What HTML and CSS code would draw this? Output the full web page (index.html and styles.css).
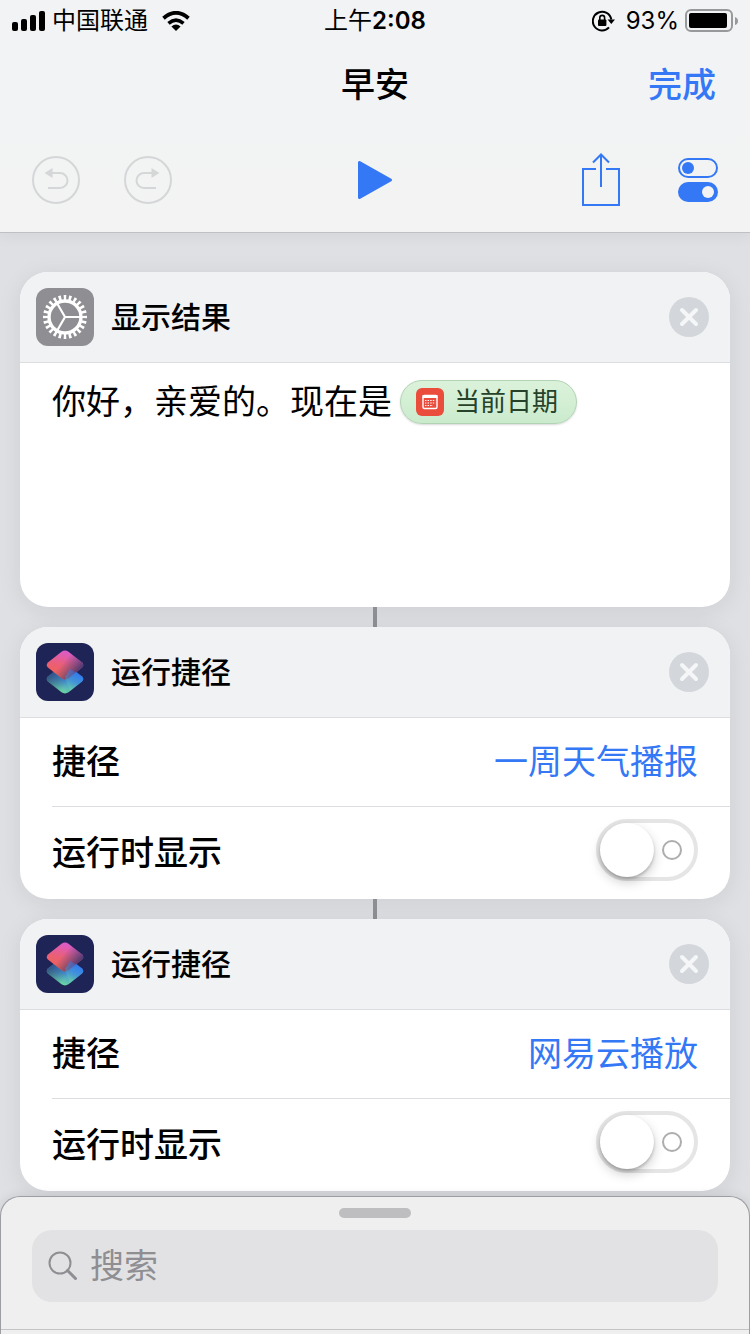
FILE: index.html
```
<!DOCTYPE html>
<html lang="zh-CN">
<head>
    <meta charset="UTF-8">
    <meta name="viewport" content="width=device-width, initial-scale=1.0">
    <title>早安</title>
    <link rel="stylesheet" href="styles.css">
</head>
<body>
    <!-- Shared icons -->
    <svg class="sprite" aria-hidden="true">
        <defs>
            <linearGradient id="tile-top" x1="0.6" y1="0" x2="0.35" y2="1">
                <stop offset="0" stop-color="#d95bd2"/>
                <stop offset="0.5" stop-color="#ea5f78"/>
                <stop offset="1" stop-color="#f2634a"/>
            </linearGradient>
            <linearGradient id="tile-shade" x1="0.45" y1="0.4" x2="0.9" y2="0.7">
                <stop offset="0" stop-color="#4a4080" stop-opacity="0"/>
                <stop offset="1" stop-color="#39336f" stop-opacity="0.9"/>
            </linearGradient>
            <linearGradient id="tile-bottom" x1="0.75" y1="0.2" x2="0.4" y2="1">
                <stop offset="0" stop-color="#2f78f2"/>
                <stop offset="0.5" stop-color="#4596d6"/>
                <stop offset="1" stop-color="#6fdc9a"/>
            </linearGradient>
            <linearGradient id="tile-dark" x1="0" y1="0.3" x2="0.55" y2="0.7">
                <stop offset="0" stop-color="#2a3a66" stop-opacity="0.85"/>
                <stop offset="1" stop-color="#2a3a66" stop-opacity="0"/>
            </linearGradient>
            <path id="tile" d="M25.500 -13.300Q29 -15.600 32.500 -13.300L45.800 -2.800Q48.800 0 45.800 2.800L32.500 13.300Q29 15.600 25.500 13.300L12.200 2.800Q9.200 0 12.200 -2.800Z"/>
        </defs>
        <symbol id="icon-shortcuts" viewBox="0 0 58 58">
            <rect width="58" height="58" rx="12" fill="#1f2456"/>
            <g transform="translate(0 36)">
                <use href="#tile" fill="url(#tile-bottom)"/>
                <use href="#tile" fill="url(#tile-dark)"/>
            </g>
            <g transform="translate(0 22)">
                <use href="#tile" fill="url(#tile-top)"/>
                <use href="#tile" fill="url(#tile-shade)"/>
            </g>
            <!-- lower tile coming through on the right of the overlap -->
            <path d="M34 26L45.800 33.200Q48.800 36 45.800 38.800L34 48L29 34Z" fill="url(#tile-bottom)" opacity="0.5"/>
        </symbol>
        <symbol id="icon-gear" viewBox="0 0 58 58">
            <rect width="58" height="58" rx="12" fill="#8e8e93"/>
            <g fill="none" stroke="#fff">
                <circle cx="29" cy="29" r="19.500" stroke-width="5" pathLength="48" stroke-dasharray="1 1" stroke-dashoffset="0.500"/>
                <circle cx="29" cy="29" r="16" stroke-width="3.400"/>
                <path stroke-width="2.200" d="M29 29H44M29 29L21.500 16M29 29L21.500 42"/>
            </g>
        </symbol>
        <symbol id="icon-close" viewBox="0 0 40 40">
            <circle cx="20" cy="20" r="20" fill="#d3d6db"/>
            <path d="M13 13L27 27M27 13L13 27" stroke="#f5f6f8" stroke-width="4" stroke-linecap="round"/>
        </symbol>
    </svg>

    <header class="top">
        <div class="status-bar">
            <div class="status-left">
                <svg width="34" height="20" viewBox="0 0 34 20" aria-hidden="true">
                    <rect x="0" y="11" width="6" height="9" rx="2"/>
                    <rect x="9" y="8" width="6" height="12" rx="2"/>
                    <rect x="18" y="4" width="6" height="16" rx="2"/>
                    <rect x="27" y="0" width="6" height="20" rx="2"/>
                </svg>
                <span class="carrier">中国联通</span>
                <svg width="28" height="20" viewBox="0 0 28 20" aria-hidden="true">
                    <path d="M14 20L9.400 15.400Q14 11.700 18.600 15.400Z"/>
                    <path d="M6.500 12.300Q14 5.900 21.500 12.300" fill="none" stroke="#000" stroke-width="3.600"/>
                    <path d="M1.500 7.200Q14 -3.600 26.500 7.200" fill="none" stroke="#000" stroke-width="3.800"/>
                </svg>
            </div>
            <span>上午<span class="time">2:08</span></span>
            <div class="status-right">
                <svg width="24" height="22" viewBox="0 0 24 22" aria-hidden="true">
                    <path d="M17 17.400A9.300 9.300 0 1 1 19.300 9.500" fill="none" stroke="#000" stroke-width="2"/>
                    <path d="M15.600 9.500H23L19.300 14Z"/>
                    <rect x="6" y="9.500" width="8.400" height="6.600" rx="1"/>
                    <path d="M7.800 10V7.800a2.400 2.400 0 0 1 4.800 0V10" fill="none" stroke="#000" stroke-width="1.600"/>
                </svg>
                <span class="percent">93%</span>
                <svg width="53" height="24" viewBox="0 0 53 24" aria-hidden="true">
                    <rect x="1" y="1" width="46" height="21" rx="5" fill="none" stroke="#98999b" stroke-width="2"/>
                    <rect x="4" y="4" width="38" height="15" rx="2"/>
                    <path d="M50 8Q53 9 53 12T50 16Z" fill="#98999b"/>
                </svg>
            </div>
        </div>

        <div class="nav-bar">
            <h1>早安</h1>
            <button class="done" type="button">完成</button>
        </div>

        <div class="toolbar">
            <div class="tools tools-left">
                <button type="button" aria-label="撤销">
                    <svg width="48" height="48" viewBox="0 0 48 48" fill="none" stroke="#d5d6d8" stroke-width="2">
                        <circle cx="24" cy="24" r="23"/>
                        <path d="M20 17H28a7.500 7.500 0 0 1 0 15H16"/>
                        <path d="M12.500 17L20.500 12V22Z" fill="#d5d6d8" stroke="none"/>
                    </svg>
                </button>
                <button type="button" aria-label="重做">
                    <svg width="48" height="48" viewBox="0 0 48 48" fill="none" stroke="#d5d6d8" stroke-width="2">
                        <circle cx="24" cy="24" r="23"/>
                        <path d="M28 17H20a7.500 7.500 0 0 0 0 15H32"/>
                        <path d="M35.500 17L27.500 12V22Z" fill="#d5d6d8" stroke="none"/>
                    </svg>
                </button>
            </div>
            <button type="button" aria-label="运行">
                <svg width="36" height="40" viewBox="0 0 36 40" fill="#3478f6" stroke="#3478f6" stroke-width="3" stroke-linejoin="round">
                    <path d="M2.500 2.500V37.500L33.500 20Z"/>
                </svg>
            </button>
            <div class="tools tools-right">
                <button type="button" aria-label="共享">
                    <svg width="40" height="54" viewBox="0 0 40 54" fill="none" stroke="#3478f6" stroke-width="2">
                        <path d="M15 16H2V52H38V16H25"/>
                        <path d="M20 34V2M12 9.500L20 1.500L28 9.500"/>
                    </svg>
                </button>
                <button type="button" aria-label="设置">
                    <svg width="40" height="44" viewBox="0 0 40 44">
                        <rect x="1" y="1" width="38" height="18" rx="9" fill="none" stroke="#3478f6" stroke-width="2"/>
                        <circle cx="10" cy="10" r="6" fill="#3478f6"/>
                        <rect x="0" y="24" width="40" height="20" rx="10" fill="#3478f6"/>
                        <circle cx="30" cy="34" r="6" fill="#f3f3f4"/>
                    </svg>
                </button>
            </div>
        </div>
    </header>

    <main class="actions">
        <section class="card">
            <div class="card-header">
                <svg class="app-icon" aria-hidden="true"><use href="#icon-gear"/></svg>
                <h2>显示结果</h2>
                <button type="button" aria-label="移除"><svg class="close-icon"><use href="#icon-close"/></svg></button>
            </div>
            <div class="result-text" role="textbox" aria-label="文本" contenteditable="true" spellcheck="false">
                <span>你好，亲爱的。现在是</span>
                <span class="token" contenteditable="false">
                    <svg width="28" height="28" viewBox="0 0 28 28" aria-hidden="true">
                        <rect width="28" height="28" rx="6" fill="#eb4d3d"/>
                        <rect x="7" y="7.500" width="14" height="13" rx="1.500" fill="none" stroke="#fff" stroke-width="1.400"/>
                        <path d="M6.500 8.500H21.500" stroke="#fff" stroke-width="3"/>
                        <path d="M9 12.500H19.500M9 15H19.500M9 17.500H17" stroke="#fff" stroke-width="1.200" stroke-dasharray="1.400 1.200"/>
                    </svg>
                    当前日期
                </span>
            </div>
        </section>

        <div class="connector"></div>

        <section class="card">
            <div class="card-header">
                <svg class="app-icon" aria-hidden="true"><use href="#icon-shortcuts"/></svg>
                <h2>运行捷径</h2>
                <button type="button" aria-label="移除"><svg class="close-icon"><use href="#icon-close"/></svg></button>
            </div>
            <div class="row">
                <span id="weather-label">捷径</span>
                <button class="value" type="button" aria-describedby="weather-label">一周天气播报</button>
            </div>
            <div class="row row-switch">
                <label for="weather-show">运行时显示</label>
                <input class="switch" type="checkbox" role="switch" id="weather-show">
            </div>
        </section>

        <div class="connector"></div>

        <section class="card">
            <div class="card-header">
                <svg class="app-icon" aria-hidden="true"><use href="#icon-shortcuts"/></svg>
                <h2>运行捷径</h2>
                <button type="button" aria-label="移除"><svg class="close-icon"><use href="#icon-close"/></svg></button>
            </div>
            <div class="row">
                <span id="music-label">捷径</span>
                <button class="value" type="button" aria-describedby="music-label">网易云播放</button>
            </div>
            <div class="row row-switch">
                <label for="music-show">运行时显示</label>
                <input class="switch" type="checkbox" role="switch" id="music-show">
            </div>
        </section>
    </main>

    <footer class="drawer">
        <div class="grabber"></div>
        <div class="search">
            <svg width="30" height="30" viewBox="0 0 30 30" fill="none" stroke="#8e8e93" aria-hidden="true">
                <circle cx="12" cy="12" r="10.500" stroke-width="2"/>
                <path d="M19.500 19.500L27.500 27.500" stroke-width="3" stroke-linecap="round"/>
            </svg>
            <input type="search" placeholder="搜索" aria-label="搜索">
        </div>
    </footer>
</body>
</html>
```
FILE: styles.css
```
*, *::before, *::after {
    margin: 0;
    padding: 0;
    box-sizing: border-box;
}
body {
    display: flex;
    flex-direction: column;
    height: 100vh;
    background: #dfe0e4;
    color: #000;
    font-family: Inter, "Noto Sans CJK SC", sans-serif;
    font-size: 34px;
    line-height: 46px;
}
button, input {
    font: inherit;
    color: inherit;
    background: none;
    border: none;
}
button {
    cursor: pointer;
}
svg {
    display: block;
    flex: none;
}
.sprite {
    position: absolute;
    width: 0;
    height: 0;
}

/* Header */
.top {
    background: linear-gradient(#f1f3f5, #f3f3f3);
    border-bottom: 1px solid #bfc0c4;
    box-shadow: 0 2px 16px rgba(0, 0, 0, 0.06);
    z-index: 1;
}
.status-bar {
    display: grid;
    grid-template-columns: 1fr auto 1fr;
    align-items: center;
    height: 42px;
    padding: 0 12px;
    font-size: 24px;
    line-height: 32px;
}
.status-left, .status-right {
    display: flex;
    align-items: center;
}
.carrier {
    margin: 0 14px 0 6px;
}
.time {
    font-weight: 600;
}
.status-right {
    justify-content: flex-end;
}
.percent {
    margin: 0 6px 0 10px;
}
.nav-bar {
    display: grid;
    grid-template-columns: 1fr auto 1fr;
    align-items: center;
    height: 86px;
    padding: 0 34px;
}
.nav-bar h1 {
    grid-column: 2;
    font-size: 34px;
    font-weight: 500;
}
.done {
    justify-self: end;
    color: #3478f6;
    font-weight: 500;
}
.toolbar {
    display: grid;
    grid-template-columns: 1fr auto 1fr;
    align-items: center;
    height: 104px;
    padding: 0 32px;
}
.tools {
    display: flex;
    align-items: center;
}
.tools-left {
    gap: 44px;
}
.tools-right {
    justify-content: flex-end;
    gap: 57px;
}

/* Action cards */
.actions {
    flex: 1;
    min-height: 0;
    padding: 39px 20px 0;
    overflow-y: auto;
}
.card {
    background: #fff;
    border-radius: 28px;
    box-shadow: 0 4px 24px rgba(0, 0, 0, 0.08);
}
.card-header {
    display: flex;
    align-items: center;
    gap: 17px;
    height: 91px;
    padding: 0 21px 0 16px;
    background: #f1f2f4;
    border-bottom: 1px solid #dcdde0;
    border-radius: 28px 28px 0 0;
}
.card-header h2 {
    flex: 1;
    font-size: 30px;
    font-weight: 500;
}
.app-icon {
    width: 58px;
    height: 58px;
}
.close-icon {
    width: 40px;
    height: 40px;
}
.result-text {
    display: flex;
    align-items: center;
    align-content: flex-start;
    flex-wrap: wrap;
    gap: 8px;
    min-height: 244px;
    padding: 16px 32px;
    outline: none;
}
.token {
    display: flex;
    align-items: center;
    gap: 10px;
    height: 44px;
    padding: 0 18px 0 15px;
    font-size: 26px;
    color: #27422a;
    background: linear-gradient(#dbf2da, #cbebcd);
    border: 1px solid #b3d3b5;
    border-radius: 22px;
    box-shadow: 0 1px 2px rgba(0, 0, 0, 0.15);
}
.connector {
    width: 4px;
    height: 20px;
    margin: 0 auto;
    background: #8e8f94;
}
.row {
    display: flex;
    align-items: center;
    justify-content: space-between;
    height: 89px;
    margin-left: 32px;
    padding-right: 32px;
    font-weight: 500;
    border-bottom: 1px solid #dcdde0;
}
.row-switch {
    height: 92px;
    border-bottom: none;
}
.value {
    color: #3478f6;
    font-weight: 400;
}
.switch {
    appearance: none;
    display: flex;
    align-items: center;
    gap: 8px;
    width: 102px;
    height: 62px;
    margin-bottom: 6px;
    border: 4px solid #e5e5e5;
    border-radius: 31px;
    cursor: pointer;
}
.switch::before {
    content: "";
    width: 54px;
    height: 54px;
    background: #fff;
    border-radius: 50%;
    box-shadow: 0 5px 12px rgba(0, 0, 0, 0.2), 0 2px 3px rgba(0, 0, 0, 0.2);
}
.switch::after {
    content: "";
    width: 20px;
    height: 20px;
    border: 2px solid #adadad;
    border-radius: 50%;
}
.switch:checked {
    flex-direction: row-reverse;
    background: #4cd964;
    border-color: #4cd964;
}

/* Bottom drawer */
.drawer {
    padding-top: 11px;
    background: #efefef;
    border: 1px solid #9d9ea2;
    border-bottom: none;
    border-radius: 20px 20px 0 0;
    box-shadow: 0 0 12px rgba(0, 0, 0, 0.1);
    z-index: 1;
}
.drawer::after {
    content: "";
    display: block;
    height: 5px;
    border-top: 1px solid #c4c4c6;
}
.grabber {
    width: 72px;
    height: 10px;
    margin: 0 auto 12px;
    background: #bebec0;
    border-radius: 5px;
}
.search {
    display: flex;
    align-items: center;
    gap: 12px;
    height: 72px;
    margin: 0 31px 27px;
    padding: 0 16px;
    background: #e2e2e4;
    border-radius: 20px;
}
.search input {
    flex: 1;
    min-width: 0;
    outline: none;
}
.search input::placeholder {
    color: #8e8e93;
}
```
